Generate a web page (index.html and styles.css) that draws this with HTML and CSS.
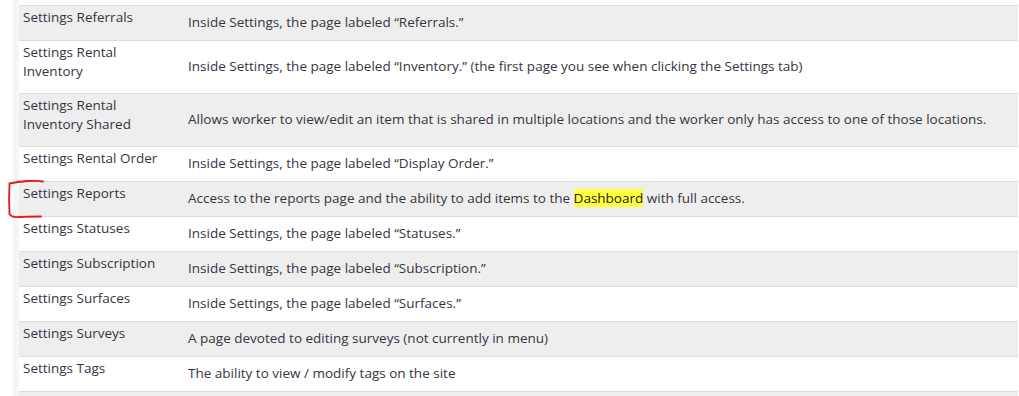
FILE: index.html
```
<!DOCTYPE html>
<html lang="en">
<head>
    <meta charset="UTF-8">
    <meta name="viewport" content="width=device-width, initial-scale=1.0">
    <title>Permissions</title>
    <link rel="stylesheet" href="styles.css">
</head>
<body>
    <div class="page">
        <table class="perms">
            <tr>
                <td class="name">Settings Referrals</td>
                <td class="desc">Inside Settings, the page labeled “Referrals.”</td>
            </tr>
            <tr>
                <td class="name">Settings Rental Inventory</td>
                <td class="desc">Inside Settings, the page labeled “Inventory.” (the first page you see when clicking the Settings tab)</td>
            </tr>
            <tr>
                <td class="name">Settings Rental Inventory Shared</td>
                <td class="desc">Allows worker to view/edit an item that is shared in multiple locations and the worker only has access to one of those locations.</td>
            </tr>
            <tr>
                <td class="name">Settings Rental Order</td>
                <td class="desc">Inside Settings, the page labeled “Display Order.”</td>
            </tr>
            <tr>
                <td class="name">Settings Reports</td>
                <td class="desc">Access to the reports page and the ability to add items to the <span class="mark">Dashboard</span> with full access.</td>
            </tr>
            <tr>
                <td class="name">Settings Statuses</td>
                <td class="desc">Inside Settings, the page labeled “Statuses.”</td>
            </tr>
            <tr>
                <td class="name">Settings Subscription</td>
                <td class="desc">Inside Settings, the page labeled “Subscription.”</td>
            </tr>
            <tr>
                <td class="name">Settings Surfaces</td>
                <td class="desc">Inside Settings, the page labeled “Surfaces.”</td>
            </tr>
            <tr>
                <td class="name">Settings Surveys</td>
                <td class="desc">A page devoted to editing surveys (not currently in menu)</td>
            </tr>
            <tr>
                <td class="name">Settings Tags</td>
                <td class="desc">The ability to view / modify tags on the site</td>
            </tr>
            <tr>
                <td class="name">&nbsp;</td>
                <td class="desc">&nbsp;</td>
            </tr>
        </table>

        <!-- hand drawn bracket next to the Reports row -->
        <svg class="bracket" width="40" height="42" viewBox="0 0 40 42">
            <path d="M37 2.5 C30 1 14 2 3.5 4.5 C3 14 3 26 3.5 35 C5 37.5 9 38.5 14 38 C22 37.5 29 37.5 35 37.5" fill="none" stroke="#e8151b" stroke-width="1.8" stroke-linecap="round"/>
        </svg>
    </div>
</body>
</html>
```

FILE: styles.css
```
body{
    margin: 0;
    background: #fff;
    font-family: 'Open Sans', sans-serif;
    font-size: 13.5px;
    color: #36353f;
}
.page{
    position: relative;
    margin-left: 13px;
    padding-top: 5px;
    border-left: 6px solid #f6f6f6;
}
.perms{
    width: 999px;
    border-collapse: collapse;
    border-top: 1px solid #dcdcdc;
}
.perms tr{
    border-bottom: 1px solid #dcdcdc;
}
.perms tr:nth-child(odd){
    background: #eeeeee;
}
.perms td{
    line-height: 19px;
}
.name{
    width: 150px;
    vertical-align: top;
    padding: 2px 11px 12px 4px;
}
.desc{
    vertical-align: middle;
    padding: 7px 4px 8px 4px;
}
.mark{
    background: #ffff3b;
    color: #222;
}
.bracket{
    position: absolute;
    left: -13px;
    top: 179px;
}
```
